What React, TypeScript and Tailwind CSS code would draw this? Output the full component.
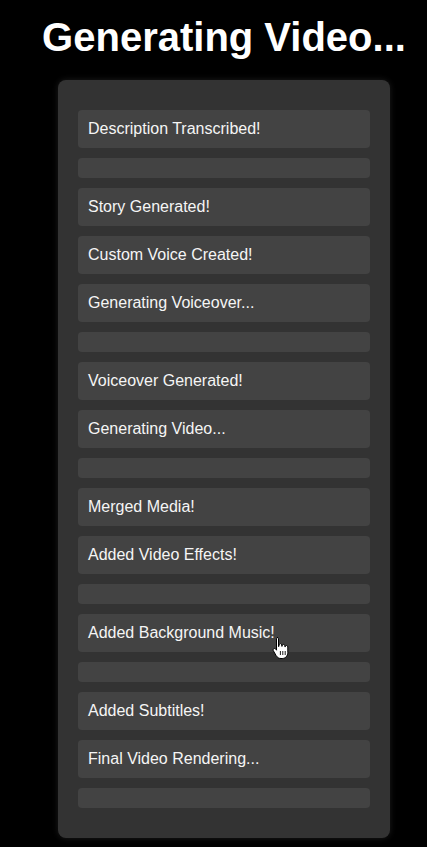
const steps: (string | null)[] = [
  "Description Transcribed!",
  null,
  "Story Generated!",
  "Custom Voice Created!",
  "Generating Voiceover...",
  null,
  "Voiceover Generated!",
  "Generating Video...",
  null,
  "Merged Media!",
  "Added Video Effects!",
  null,
  "Added Background Music!",
  null,
  "Added Subtitles!",
  "Final Video Rendering...",
  null,
];

function HandCursor() {
  return (
    <svg
      className="absolute left-[194px] top-[22px] z-10"
      width="18"
      height="24"
      viewBox="0 0 18 24"
    >
      <path
        d="M5 1.5c.9 0 1.5.6 1.5 1.5v7.5l.5-.1V9c0-.8.6-1.4 1.4-1.4s1.4.6 1.4 1.4v1.3h.3V9.8c0-.8.6-1.4 1.4-1.4s1.4.6 1.4 1.4v1h.3c0-.8.6-1.3 1.3-1.3s1.3.6 1.3 1.4v5.6c0 3.3-2.3 6-5.6 6H9c-2.2 0-3.6-1-4.8-2.8L1.4 14.8c-.5-.8-.3-1.7.4-2.1.7-.4 1.5-.2 2 .5l.7 1V3c0-.9.6-1.5 1.5-1.5z"
        fill="#fff"
        stroke="#000"
        strokeWidth="1"
      />
      <path d="M8.4 15v4M10.8 15v4M13.2 15v4" stroke="#000" strokeWidth="0.9" />
    </svg>
  );
}

export default function App() {
  return (
    <div
      className="min-h-[847px] bg-black pl-[21px] flex flex-col items-center"
      style={{ fontFamily: '"Liberation Sans", Arial, sans-serif' }}
    >
      <h1 className="mt-[14px] text-[40px] leading-[46px] font-bold text-white">
        Generating Video...
      </h1>
      <div className="mt-[20px] w-[332px] rounded-lg bg-[#333333] px-5 py-[30px] flex flex-col gap-[10px] shadow-[0_0_6px_rgba(80,80,80,0.35)]">
        {steps.map((step, i) =>
          step ? (
            <div
              key={i}
              className="relative h-[38px] rounded bg-[#434343] px-[10px] flex items-center text-[16px] text-[#f5f5f5]"
            >
              {step}
              {step === "Added Background Music!" && <HandCursor />}
            </div>
          ) : (
            <div key={i} className="h-[20px] rounded bg-[#434343]" />
          )
        )}
      </div>
    </div>
  );
}
